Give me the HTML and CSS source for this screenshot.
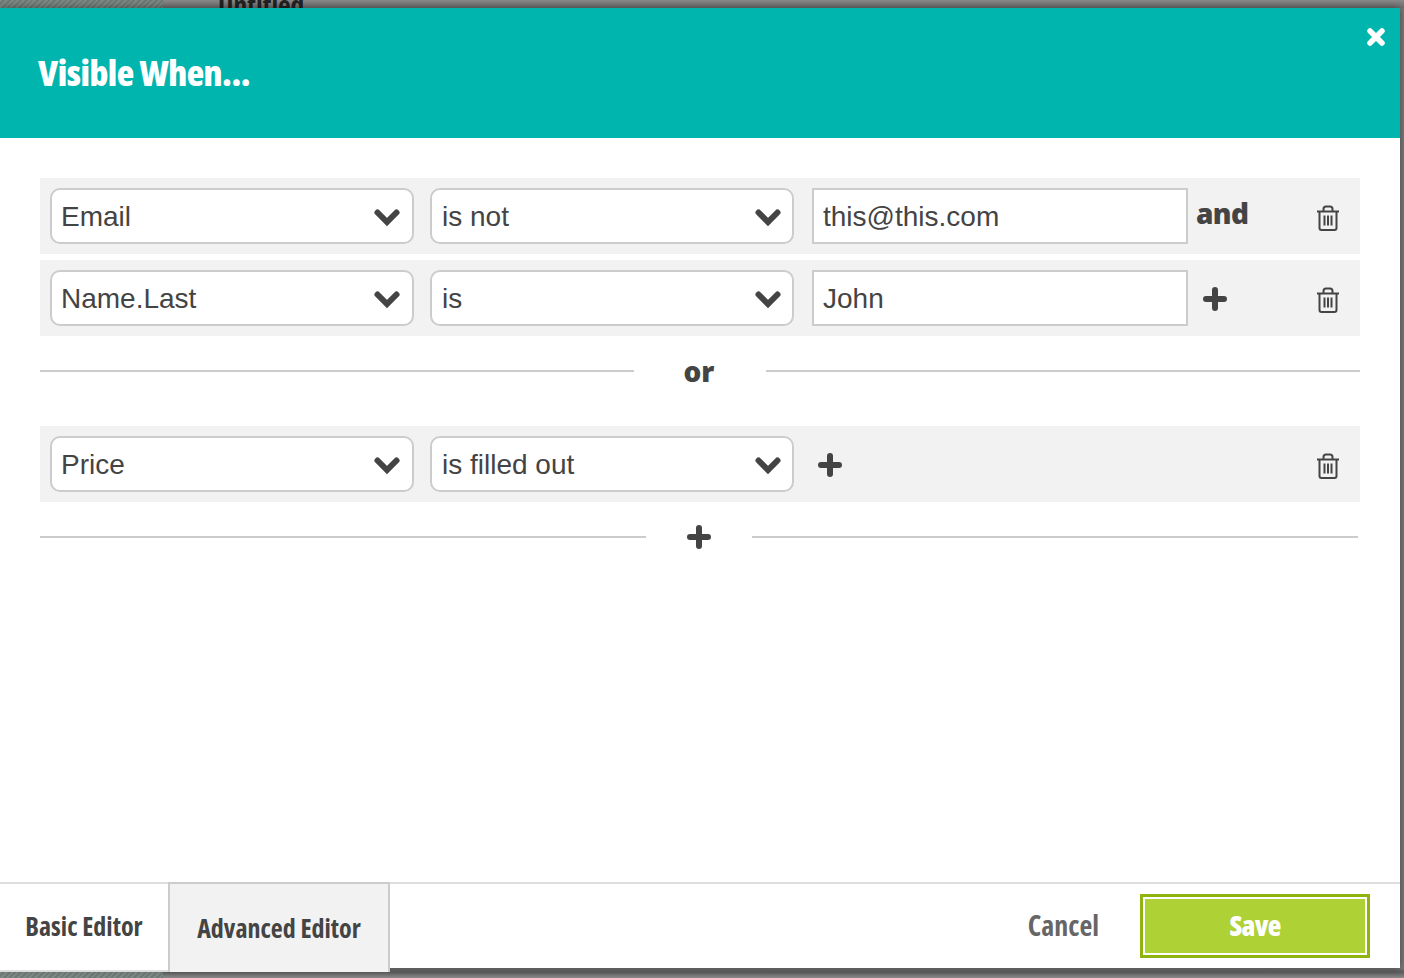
FILE: index.html
```html
<!DOCTYPE html>
<html lang="en">
<head>
<meta charset="utf-8">
<title>Visible When</title>
<link rel="stylesheet" href="styles.css">
</head>
<body>
<svg class="defs" width="0" height="0" aria-hidden="true">
  <symbol id="chev" viewBox="0 0 28 20"><path d="M4.500 5.500l9.500 9.500 9.500-9.500" fill="none" stroke="#444" stroke-width="6" stroke-linecap="round" stroke-linejoin="miter"/></symbol>
  <symbol id="plus" viewBox="0 0 24 24"><path d="M12 3v18M3 12h18" fill="none" stroke="#444" stroke-width="6" stroke-linecap="round"/></symbol>
  <symbol id="trash" viewBox="0 0 24 26"><path d="M1 6.500h22M3.500 6.500v16.500a2 2 0 0 0 2 2h13a2 2 0 0 0 2-2V6.500M7.500 6.500V4a2.500 2.500 0 0 1 2.500-2.500h4A2.500 2.500 0 0 1 16.500 4v2.500" fill="none" stroke="#444" stroke-width="2"/><path d="M8.500 10.500v10M12 10.500v10M15.500 10.500v10" fill="none" stroke="#444" stroke-width="2"/></symbol>
</svg>
<div class="hatch hatch-top"></div>
<div class="hatch hatch-bottom"></div>
<div class="behind-title">Untitled</div>
<div class="modal">
  <header class="head">
    <h1 class="title">Visible When...</h1>
    <svg class="close" viewBox="0 0 20 20" width="20" height="20" aria-label="Close"><path d="M4 4l12 12M16 4L4 16" fill="none" stroke="#fff" stroke-width="5.500" stroke-linecap="round"/></svg>
  </header>
  <main class="body">
    <div class="row">
      <div class="select"><span>Email</span><svg class="chev"><use href="#chev"/></svg></div>
      <div class="select"><span>is not</span><svg class="chev"><use href="#chev"/></svg></div>
      <div class="field"><span>this@this.com</span></div>
      <div class="and">and</div>
      <svg class="trash"><use href="#trash"/></svg>
    </div>
    <div class="row">
      <div class="select"><span>Name.Last</span><svg class="chev"><use href="#chev"/></svg></div>
      <div class="select"><span>is</span><svg class="chev"><use href="#chev"/></svg></div>
      <div class="field"><span>John</span></div>
      <svg class="plus plus-field"><use href="#plus"/></svg>
      <svg class="trash"><use href="#trash"/></svg>
    </div>
    <div class="divider divider-or"><span class="line"></span><span class="or">or</span><span class="line"></span></div>
    <div class="row">
      <div class="select"><span>Price</span><svg class="chev"><use href="#chev"/></svg></div>
      <div class="select"><span>is filled out</span><svg class="chev"><use href="#chev"/></svg></div>
      <svg class="plus plus-select"><use href="#plus"/></svg>
      <svg class="trash"><use href="#trash"/></svg>
    </div>
    <div class="divider divider-plus"><span class="line"></span><svg class="plus"><use href="#plus"/></svg><span class="line"></span></div>
  </main>
  <footer class="foot">
    <div class="tab tab-basic">Basic Editor</div>
    <div class="tab tab-advanced">Advanced Editor</div>
    <div class="actions">
      <span class="cancel">Cancel</span>
      <span class="save"><span class="save-inner">Save</span></span>
    </div>
  </footer>
</div>
</body>
</html>
```
FILE: styles.css
```css
html, body { margin: 0; padding: 0; height: 978px; overflow: hidden; }
body {
  position: relative;
  width: 1404px;
  background: linear-gradient(#8a8a8a, #6f6f6f 8px, #7a7a7a 8px, #7a7a7a 968px, #5c5c5c 972px, #8a8a8a 978px);
  font-family: "Liberation Sans", Arial, sans-serif;
  color: #444;
}
.defs { position: absolute; }
.hatch {
  position: absolute; left: 0; width: 163px;
  background: repeating-linear-gradient(135deg, #7d8a86 0 2px, #6f7a77 2px 4px);
}
.hatch-top { top: 0; height: 8px; }
.hatch-bottom { top: 972px; height: 6px; }
.behind-title {
  position: absolute; left: 218px; top: -10px;
  font: 700 27.500px/30px "Open Sans", sans-serif; font-stretch: 75%; color: #222;
}
.modal {
  position: absolute; left: 0; top: 8px;
  width: 1400px; height: 960px;
  background: #fff;
  display: flex; flex-direction: column;
  box-shadow: 0 0 8px rgba(0,0,0,.45);
}
.head {
  flex: none; height: 130px; background: #00b5ad;
  display: flex; align-items: center; padding-left: 38px; position: relative;
}
.title {
  margin: 0; color: #fff;
  font: 800 36px/44px "Open Sans", "Liberation Sans Narrow", sans-serif;
  font-stretch: 75%; letter-spacing: -.5px;
}
.close { position: absolute; left: 1366px; top: 19px; }
.body { flex: 1; padding: 40px 40px 0; display: flex; flex-direction: column; }
.row {
  height: 76px; background: #f2f2f2; box-sizing: border-box;
  display: flex; align-items: center; padding-left: 10px; position: relative;
  margin-bottom: 6px;
}
.select {
  width: 364px; height: 56px; box-sizing: border-box;
  background: #fff; border: 2px solid #ccc; border-radius: 10px;
  display: flex; align-items: center; justify-content: space-between;
  padding: 2px 11px 0 9px; font-size: 28px; margin-right: 16px;
}
.select:nth-child(2) { padding-left: 10px; padding-right: 10px; }
.chev { width: 28px; height: 20px; }
.field {
  width: 376px; height: 56px; box-sizing: border-box; margin-left: 2px;
  background: #fff; border: 2px solid #ccc;
  display: flex; align-items: center; padding: 2px 0 0 9px; font-size: 28px;
}
.and { font: 800 28px/38px "Open Sans", sans-serif; letter-spacing: -.6px; margin-left: 8px; position: relative; top: -3px; }
.plus { width: 24px; height: 24px; }
.plus-field { margin: 2px 0 0 15px; }
.plus-select { margin: 2px 0 0 8px; }
.trash { width: 24px; height: 26px; position: absolute; left: 1276px; top: 27px; }
.divider { display: flex; align-items: center; }
.line { flex: 1; height: 2px; background: #ccc; }
.divider-or { height: 58px; margin-bottom: 26px; }
.divider-or .or { width: 132px; text-align: center; font: 800 28px/38px "Open Sans", sans-serif; position: relative; left: -1px; }
.divider-plus { height: 24px; margin-top: 17px; width: 1318px; }
.divider-plus .plus { margin: 0 41px; }
.foot {
  flex: none; height: 86px; border-top: 2px solid #ddd; box-sizing: border-box;
  display: flex; position: relative;
}
.tab {
  font: 700 26px/32px "Open Sans", sans-serif; font-stretch: 75%; color: #444;
  display: flex; align-items: center; justify-content: center; box-sizing: border-box;
}
.tab-basic { width: 168px; height: 88px; background: #fff; border-bottom: 2px solid #ddd; padding-bottom: 2px; }
.tab-advanced {
  width: 222px; height: 90px; margin-top: -2px; background: #f2f2f2;
  border: 2px solid #ccc; border-bottom: 0; position: relative; z-index: 1;
}
.actions { flex: 1; display: flex; align-items: flex-start; justify-content: flex-end; padding-top: 10px; }
.cancel {
  font: 700 28px/62px "Open Sans", sans-serif; font-stretch: 75%; color: #666;
  margin-right: 41px;
}
.save {
  width: 230px; height: 64px; box-sizing: border-box; border: 3px solid #8fb30f; padding: 2px;
  background: #fff; margin-right: 30px; position: relative; z-index: 2;
}
.save-inner {
  display: flex; height: 100%; align-items: center; justify-content: center; box-sizing: border-box;
  background: #aed136; color: #fff; padding-bottom: 2px; letter-spacing: -.7px;
  font: 800 28px/32px "Open Sans", sans-serif; font-stretch: 75%;
}
```
